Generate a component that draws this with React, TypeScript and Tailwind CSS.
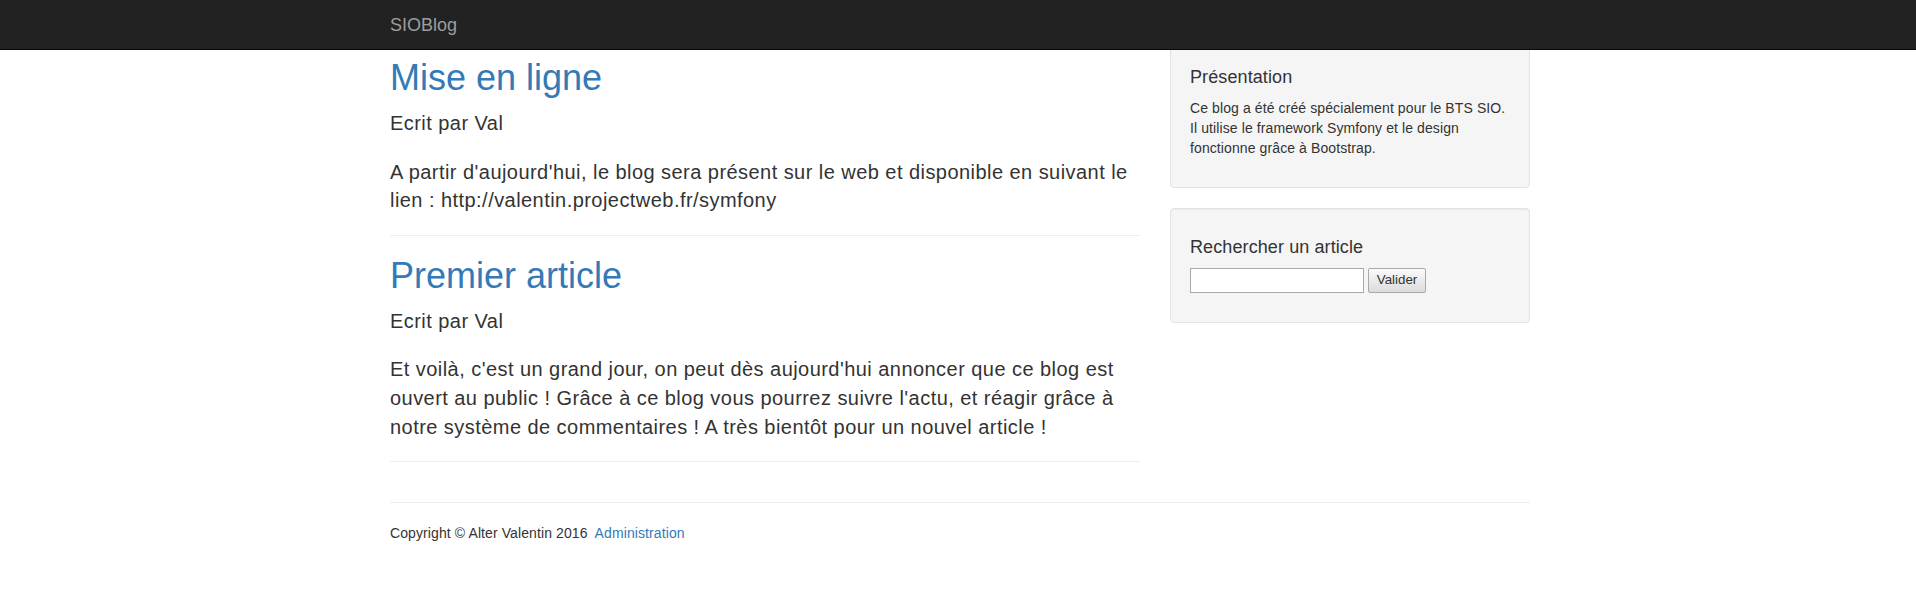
import React from 'react';

interface Article {
    id: number;
    title: string;
    author: string;
    content: string;
}

const articles: Article[] = [
    {
        id: 1,
        title: 'Mise en ligne',
        author: 'Val',
        content:
            "A partir d'aujourd'hui, le blog sera présent sur le web et disponible en suivant le lien : http://valentin.projectweb.fr/symfony",
    },
    {
        id: 2,
        title: 'Premier article',
        author: 'Val',
        content:
            "Et voilà, c'est un grand jour, on peut dès aujourd'hui annoncer que ce blog est ouvert au public ! Grâce à ce blog vous pourrez suivre l'actu, et réagir grâce à notre système de commentaires ! A très bientôt pour un nouvel article !",
    },
];

const Well = ({ title, children }: { title: string; children: React.ReactNode }) => (
    <div className="mb-[20px] rounded-[4px] border border-[#e3e3e3] bg-[#f5f5f5] p-[19px] shadow-[inset_0_1px_1px_rgba(0,0,0,0.05)]">
        <h4 className="mt-[10px] mb-[10px] text-[18px] leading-[1.1] font-normal">{title}</h4>
        {children}
    </div>
);

export default function App() {
    return (
        <div className="min-h-screen bg-white pl-[4px] font-['Liberation_Sans',Arial,sans-serif] text-[14px] leading-[20px] tracking-[0.1px] text-[#333]">
            {/* Navbar (fixed, sits over the top of the page) */}
            <nav className="fixed inset-x-0 top-0 z-10 h-[50px] border-b border-[#080808] bg-[#222] pl-[4px]">
                <div className="mx-auto w-[1170px] px-[15px]">
                    <a href="#" className="inline-block py-[15px] text-[18px] leading-[20px] tracking-normal text-[#9d9d9d]">
                        SIOBlog
                    </a>
                </div>
            </nav>

            <div className="mx-auto w-[1170px] px-[15px] pt-[38px]">
                <div className="-mx-[15px] flex items-start">
                    {/* Articles */}
                    <main className="w-[780px] px-[15px]">
                        {articles.map(article => (
                            <article key={article.id}>
                                <h1 className="mt-[20px] mb-[11.5px] text-[36px] leading-[1.1] tracking-normal text-[#337ab7]">
                                    <a href="#">{article.title}</a>
                                </h1>
                                <p className="mb-[20px] text-[20px] leading-[28.57px] tracking-[0.45px]">
                                    Ecrit par {article.author}
                                </p>
                                <p className="text-[20px] leading-[28.57px] tracking-[0.45px]">{article.content}</p>
                                <hr className="my-[20px] border-t border-[#eee]" />
                            </article>
                        ))}
                    </main>

                    {/* Sidebar */}
                    <aside className="w-[390px] px-[15px]">
                        <Well title="Présentation">
                            <p className="mb-[10px]">
                                Ce blog a été créé spécialement pour le BTS SIO.
                                <br />
                                Il utilise le framework Symfony et le design fonctionne grâce à Bootstrap.
                            </p>
                        </Well>
                        <Well title="Rechercher un article">
                            <form className="mb-[10px] flex items-center gap-[4px]" onSubmit={e => e.preventDefault()}>
                                <input
                                    type="text"
                                    className="h-[25px] w-[174px] border border-[#a9a9a9] bg-white px-[2px] text-[13.33px]"
                                />
                                <button
                                    type="submit"
                                    className="h-[25px] w-[58px] rounded-[2px] border border-[#a9a9a9] bg-gradient-to-b from-[#fafafa] to-[#dcdcdc] text-[13.33px] tracking-normal text-[#333]"
                                >
                                    Valider
                                </button>
                            </form>
                        </Well>
                    </aside>
                </div>

                {/* Footer */}
                <footer>
                    <hr className="mt-[20px] mb-[20px] border-t border-[#eee]" />
                    <p>
                        Copyright © Alter Valentin 2016
                        <a href="#" className="ml-[7px] text-[#337ab7]">
                            Administration
                        </a>
                    </p>
                </footer>
            </div>
        </div>
    );
}
